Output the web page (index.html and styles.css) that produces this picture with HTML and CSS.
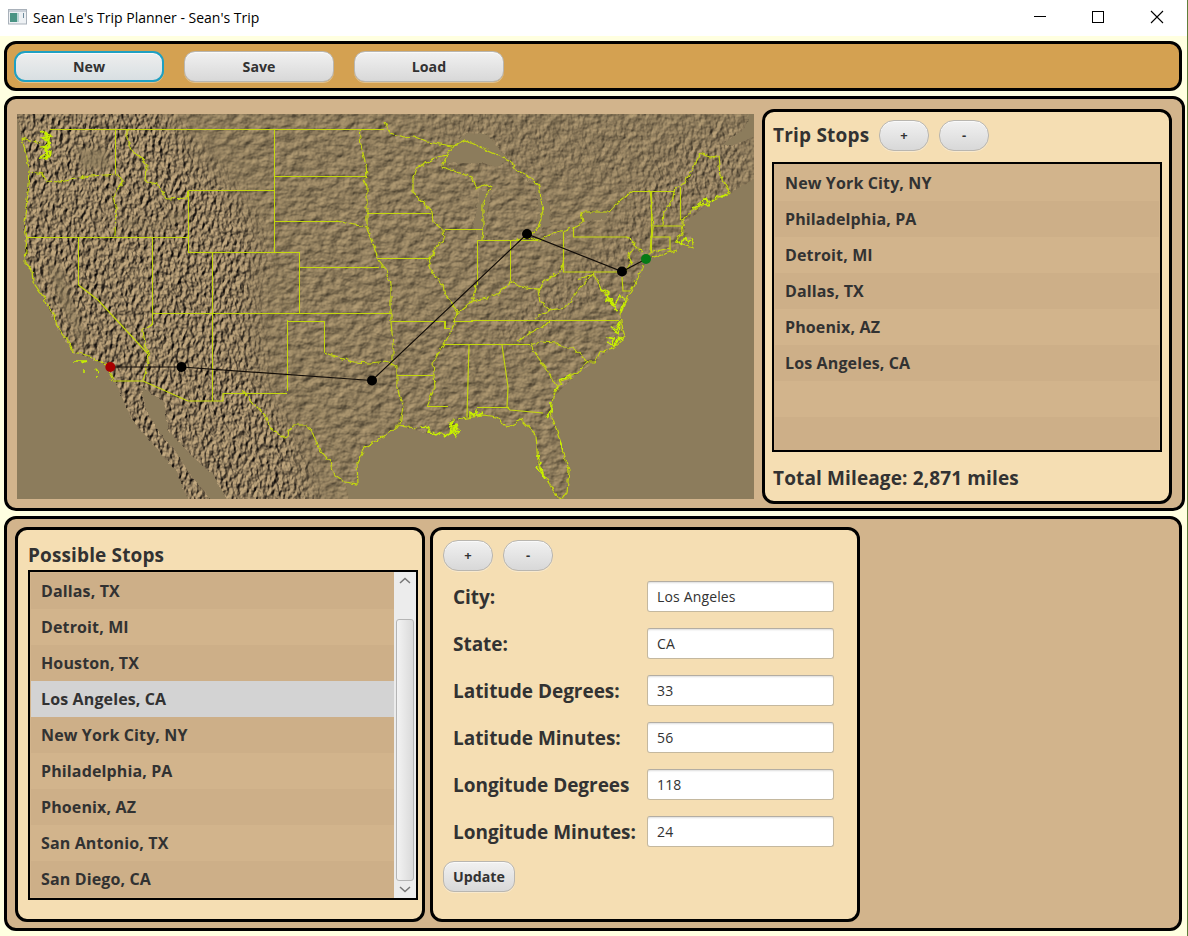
FILE: index.html
```
<!DOCTYPE html>
<html lang="en">
<head>
<meta charset="utf-8">
<title>Sean Le's Trip Planner - Sean's Trip</title>
<link rel="stylesheet" href="styles.css">
</head>
<body>
<div class="window">
  <header class="titlebar">
    <svg class="app-icon" width="19" height="16" viewBox="0 0 19 16"><rect x=".5" y=".5" width="18" height="14.500" fill="#eef1f4" stroke="#a9b1ba"/><rect x="1" y="1" width="17" height="2" fill="#c9d0d8"/><rect x="2" y="4" width="7" height="9" fill="#4a9484"/><rect x="9" y="4" width="2" height="9" fill="#b9d5d4"/><rect x="15" y="4" width="1" height="5" fill="#6f8c9c"/></svg>
    <span class="title">Sean Le's Trip Planner - Sean's Trip</span>
    <svg class="controls" width="130" height="14" viewBox="0 0 130 14" fill="none" stroke="#000" shape-rendering="crispEdges"><path d="M0 6.500H12M58.500 1.500h11v11h-11z"/><path d="M117 1l12 12M129 1l-12 12" shape-rendering="auto" stroke-width="1.100"/></svg>
  </header>
  <main class="workspace">
    <nav class="panel toolbar">
      <button class="btn wide focused">New</button>
      <button class="btn wide">Save</button>
      <button class="btn wide">Load</button>
    </nav>
    <section class="panel trip">
      <svg class="map" width="737" height="385" viewBox="17 114 737 385">
        <defs>
          <filter id="rough" x="0" y="0" width="1" height="1" color-interpolation-filters="sRGB">
            <feTurbulence type="fractalNoise" baseFrequency=".26 .15" numOctaves="4" seed="7"/>
            <feColorMatrix values="0 0 0 0 0 0 0 0 0 0 0 0 0 0 0 1 0 0 0 0"/>
            <feDiffuseLighting surfaceScale="3.300" diffuseConstant="1.280" lighting-color="#a08c68"><feDistantLight azimuth="220" elevation="48"/></feDiffuseLighting>
            <feComponentTransfer><feFuncR type="linear" slope=".92" intercept=".04"/><feFuncG type="linear" slope=".92" intercept=".03"/><feFuncB type="linear" slope=".92" intercept=".03"/></feComponentTransfer>
          </filter>
          <filter id="gentle" x="0" y="0" width="1" height="1" color-interpolation-filters="sRGB">
            <feTurbulence type="fractalNoise" baseFrequency=".09 .13" numOctaves="6" seed="19"/>
            <feColorMatrix values="0 0 0 0 0 0 0 0 0 0 0 0 0 0 0 1 0 0 0 0"/>
            <feDiffuseLighting surfaceScale="1.700" diffuseConstant="1.260" lighting-color="#978462"><feDistantLight azimuth="225" elevation="48"/></feDiffuseLighting>
          </filter>
          <filter id="soft" x="-.2" y="-.2" width="1.400" height="1.400"><feGaussianBlur stdDeviation="14"/></filter>
          <filter id="basin" x="-.3" y="-.3" width="1.600" height="1.600"><feGaussianBlur stdDeviation="3"/></filter>
          <filter id="jag" x="-.05" y="-.05" width="1.100" height="1.100"><feTurbulence type="fractalNoise" baseFrequency=".25" numOctaves="2" seed="3"/><feDisplacementMap in="SourceGraphic" scale="4" xChannelSelector="R" yChannelSelector="G"/></filter>
          <filter id="wiggle" filterUnits="userSpaceOnUse" x="10" y="105" width="750" height="400" color-interpolation-filters="sRGB"><feTurbulence type="fractalNoise" baseFrequency=".18" numOctaves="2" seed="3"/><feDisplacementMap in="SourceGraphic" scale="5" xChannelSelector="R" yChannelSelector="G"/></filter>
          <mask id="ranges"><g fill="#fff" filter="url(#soft)">
            <path d="M0 94H160L195 150 232 190 262 235 255 320 265 390 300 440 320 520H120L90 380 0 280z"/>
            <path d="M470 350L530 305 600 250 640 190 690 140 750 120V180L650 235 600 290 520 345z" fill-opacity=".5"/>
            <path d="M390 104H754V200L600 190 450 150z" fill-opacity=".3"/></g></mask>
        </defs>
        <rect x="17" y="114" width="737" height="385" filter="url(#gentle)"/>
        <g mask="url(#ranges)"><rect x="17" y="114" width="737" height="385" filter="url(#rough)"/></g>
        <g fill="#8c7b5c" filter="url(#basin)" opacity=".65"><path d="M48 262L62 270 78 318 90 344 80 340 58 300z"/><path d="M78 147l30 2 5 20-32 1z"/><path d="M122 219l35 6 32-18 3 8-35 14-33-3z"/></g>
        <g class="water" filter="url(#jag)">
          <path d="M10 105L17 118 23 138 30 170 24 225 27 262 43 295 57 327 73 352 107 365 116 383 132 420 152 443 176 470 191 505H10z"/>
          <path d="M140 385L164 402 169 431 194 458 213 474 230 505H215L192 478 176 452 157 430 146 410z"/>
          <path d="M350 505L346 482 358 484 357 463 365 448 398 426 437 435 458 430 457 420 483 415 497 417 507 427 522 420 536 435 538 463 557 499 567 493 569 470 551 413 553 397 578 373 595 362 625 337 620 315 643 265 652 258 677 250 692 240 682 225 710 202 730 193 760 175V505z"/>
          <path d="M441 163L453 146 466 133 487 134 507 158 498 168 483 163z"/><path d="M480 190l12 0-7 30 1 18-6 7-6-20z"/><path d="M516 172l11 6 11 8 12 22 1 18-14 2 2-16-4-26-16-12z"/>
          <path d="M530 240l20-3 25-12-7 11-20 7zM582 212l26 0-3 8-21 1z"/><path d="M750 110l10 0v25l-28 10-10 0 24-18z"/>
        </g>
        <g class="borders">
          <path shape-rendering="crispEdges" d="M50 129.500H384M115.500 129V174M27 237.500H188.500M188.500 191V252.500H299.500V314M188.500 190.500H274.500M274.500 129V252.500M274.500 176.500H367M274.500 221.500H338M78.500 237V285M152.500 237V325M212.500 252.500V401M152 313.500H392M287.500 320V391M287 321.500H324.500V352M299 267.500H379M367 213.500H431M377 258.500H428M445 229.500H483M477 240.500H538M477.500 240V285M510.500 240V281M391 321.500H445V328.500H450M453 321.500H472V320.500H619M443 344.500H530M397 375.500H433M427 406.500H448M477 407.500H509"/>
          <path d="M563.500 232V272H623M573.500 228V237H627M651.500 191V252M653 226H682M650 237H670V252M680.500 187V220M632 191.500H675M469 345L467 417M502 345L508 387 507 407 510 410 543 413M78.500 285L98 300 149 355M143 381L188 401H223V393.500H287M113 381H143M622 277L623 291H630"/>
          <g filter="url(#wiggle)">
            <path d="M22 138L26 155 30 170 29 185 24 222 27 238 25 262 32 270 33 282 42 295 47 304 55 317 57 327 68 340 73 352 87 355 97 361 107 365 113 381M22 138L40 143M30 172L43 174 46 181 60 182 90 176 118 174 122 183 113 197 116 205 115 237M127 129V138L132 152 139 156 147 165 146 181 157 184 167 199 187 198 188 191M152 325L143 330 145 343 149 355 147 367 143 381"/>
            <path d="M243 391L252 402 265 415 270 428 279 434 285 438 293 425 307 425 313 433 318 447 330 462 335 475 345 482 358 484 357 463 365 448 383 437 398 426 417 428M324 352L337 357 353 362 370 363 387 361 397 367V388L403 407 400 425"/>
            <path d="M359 129L361 145 366 165 367 177 363 181 367 185V227M337 221L350 224 367 227 370 237 376 252 378 260 387 272 386 277 391 283V321L393 345V362"/>
            <path d="M385 123L390 133 403 137 413 136 427 142 453 146 465 140 510 161 517 170 527 176 539 185 543 212 538 228 527 238M453 146L447 155 437 157 417 168 413 180 413 193 423 202 432 212 433 222 443 230 444 240 435 247 433 255 428 260 432 272 443 285 445 295 452 303 457 313 452 330 443 345 433 363 435 387 427 406M447 155L442 167 457 172 472 177 477 188 487 184 493 187 487 193 483 205V230L482 240"/>
            <path d="M477 285L472 301 487 298 500 293 510 282 527 288 538 290 543 282 560 272 563 258M472 301L460 311 457 315M510 241L527 238 540 240 553 233 573 228 583 222 581 212 609 212 618 202 632 191M538 290L540 302 550 310 565 308 577 292 593 273 577 280M593 273L600 287 612 302M550 310L535 318M627 237L632 242 642 252M635 248L628 255 632 263 623 275M675 187L672 202 664 212 663 225M650 191L653 215 650 252"/>
            <path d="M675 187L685 183 692 168 700 154 710 157 718 156 720 175 730 193 710 202 692 210 682 222 683 232 675 242 693 247 692 237M677 250L652 258M648 253L670 248M643 265L638 278 630 292 625 304 620 315 621 322 625 337 613 348 600 352 595 362 587 362 578 373 560 383 553 397 551 413 560 440 569 470 567 493 562 499 557 497 547 480 538 463 536 435 522 420 507 427 497 417 483 415 457 420M530 346L547 370 557 387M530 345L540 342 557 343 562 347 573 347 587 362M550 321L543 327 530 333 517 342"/>
          </g>
          <g class="dense" filter="url(#wiggle)"><path d="M40 133l6-2 4 5-8 2 7 3 1 6-7 1 8 4-1 5-9 2 5-7 4-17M45 131l3 8-2 12 2 8M46 132l3 27M47 133v25M73 361h14l-5 2M84 370v2M95 369l3 4M97 376v2"/><path d="M420 427l10 1-2 4 8 3 5-3 4 5 7-5 4 5 3-6-6-2 4-4-8 2 2-6 4-1M452 420l-2 14 8-10-4 12M470 417v-4l3 3 3-5v5l7-3M600 287l8 6-2 8 6-3 2 8 7-10 4 4-4 12M608 300l10 12M606 294l8 12M610 326l6 4 4-8-1 12-7-4M607 337l7 2-1 6-7-2 9 2 4-8 4 3M560 381l12-7M553 393l5-6M692 208l12-5 4 3 9-10 5 2 4-4M698 204l8-6 2 5M676 240l5 5 4-8 3 6 5-4M538 455l3 7-4 5 8 12-4-11M551 402v10l-5 6M560 441l3 10"/></g>
        </g>
        <path d="M110 367H181.500L372 380.500 527 234 622 271.500 646 259" fill="none" stroke="#120d08" stroke-width="1.200"/>
        <g><circle cx="110.300" cy="367" r="5" fill="#a80000"/><circle cx="181.500" cy="367" r="5"/><circle cx="372" cy="380.500" r="5"/><circle cx="527" cy="234" r="5"/><circle cx="622" cy="271.500" r="5"/><circle cx="646" cy="259" r="5" fill="#067a16"/></g>
      </svg>
      <aside class="panel stops">
        <div class="stops-head"><h2>Trip Stops</h2><button class="btn pill">+</button><button class="btn pill">-</button></div>
        <ul class="list">
          <li>New York City, NY</li><li>Philadelphia, PA</li><li>Detroit, MI</li><li>Dallas, TX</li><li>Phoenix, AZ</li><li>Los Angeles, CA</li><li></li><li></li>
        </ul>
        <p class="mileage">Total Mileage: 2,871 miles</p>
      </aside>
    </section>
    <section class="panel lower">
      <div class="panel possible">
        <h2>Possible Stops</h2>
        <div class="scrollbox">
          <ul class="list shifted">
            <li>Dallas, TX</li><li>Detroit, MI</li><li>Houston, TX</li><li class="selected">Los Angeles, CA</li><li>New York City, NY</li><li>Philadelphia, PA</li><li>Phoenix, AZ</li><li>San Antonio, TX</li><li>San Diego, CA</li>
          </ul>
          <div class="scrollbar">
            <svg width="12" height="7" viewBox="0 0 12 7"><path d="M1 6l5-4.500L11 6" fill="none" stroke="#777" stroke-width="1.500"/></svg>
            <div class="thumb"></div>
            <svg width="12" height="7" viewBox="0 0 12 7"><path d="M1 1l5 4.500L11 1" fill="none" stroke="#777" stroke-width="1.500"/></svg>
          </div>
        </div>
      </div>
      <div class="panel editor">
        <div class="editor-head"><button class="btn pill">+</button><button class="btn pill">-</button></div>
        <form class="fields">
          <label>City:</label><input value="Los Angeles">
          <label>State:</label><input value="CA">
          <label>Latitude Degrees:</label><input value="33">
          <label>Latitude Minutes:</label><input value="56">
          <label>Longitude Degrees</label><input value="118">
          <label>Longitude Minutes:</label><input value="24">
        </form>
        <button class="btn update">Update</button>
      </div>
    </section>
  </main>
</div>
</body>
</html>
```
FILE: styles.css
```
* { box-sizing: border-box; }
body { margin: 0; font-family: "Open Sans", "Noto Sans", sans-serif; color: #323232; }
h2, p, ul { margin: 0; padding: 0; list-style: none; }
.window { width: 1188px; height: 936px; display: flex; flex-direction: column; background: #fff; border-right: 1px solid #5e7f3a; overflow: hidden; }
.titlebar { height: 36px; display: flex; align-items: center; padding: 0 23px 2px 8px; }
.app-icon { margin-bottom: 1px; }
.title { margin-left: 6px; font-size: 14px; color: #000; }
.controls { margin-left: auto; }
.workspace { flex: 1; display: flex; flex-direction: column; gap: 5px; padding: 5px 2px 5px 4px; background: #ffffe0; }
.panel { border: 3px solid #000; border-radius: 12px; background: #d2b48c; }
.toolbar { width: 1178px; height: 50px; display: flex; gap: 20px; padding: 7px; background: #d4a151; }
.trip { height: 415px; display: flex; justify-content: space-between; padding: 10px; }
.map { margin: 5px 0 0; display: block; }
.water { fill: #8c7b5c; }
.borders { fill: none; stroke: #c4d80c; stroke-width: 1.15; }
.dense { stroke: #c8f000; stroke-width: 1.5; }
.btn { height: 31px; border: 1px solid #b9b6b0; border-radius: 11px; background: linear-gradient(#f1f1f1, #d8d8d8); box-shadow: inset 0 1px #fafafa, 0 1px rgba(255,255,255,.35); color: #323232; font: 700 14.200px/29px "Open Sans", sans-serif; padding: 0; }
.wide { width: 150px; }
.focused { border: 2px solid #1fa0c2; line-height: 27px; background: linear-gradient(#eee, #d8dfe2); }
.pill { width: 50px; border-radius: 15px; font-size: 13px; }
.stops { width: 410px; height: 395px; padding: 8px 7px; background: #f5deb3; }
.stops-head { display: flex; gap: 10px; }
h2, .mileage, label { font-size: 19px; font-weight: 700; line-height: 30px; letter-spacing: .13px; white-space: nowrap; }
label { line-height: 32px; height: 31px; letter-spacing: -.03px; }
.stops-head h2 { width: 97px; padding-left: 1px; letter-spacing: .2px; }
.list { flex: 1; padding: 1px; font-size: 16px; font-weight: 700; letter-spacing: .13px; line-height: 36px; background: #d2b48c; }
.list li { height: 36px; padding-left: 10px; background: #d2b48c; }
.list li:nth-child(even) { background: #cdaf88; }
.stops .list { height: 290px; margin-top: 11px; border: 2px solid #000; overflow: hidden; }
.shifted li:nth-child(odd) { background: #cdaf88; }
.shifted li:nth-child(even) { background: #d2b48c; }
.list li.selected { background: #d3d3d3; }
.shifted { padding-right: 0; }
.mileage { margin: 11px 0 0 1px; }
.lower { width: 1178px; height: 415px; display: flex; gap: 5px; padding: 8px; }
.possible { width: 410px; height: 395px; padding: 10px 4px 0 10px; background: #f5deb3; }
.scrollbox { height: 330px; display: flex; border: 2px solid #000; overflow: hidden; }
.scrollbar { width: 22px; display: flex; flex-direction: column; align-items: center; padding: 5px 1px; background: #ececec; }
.thumb { width: 18px; height: 262px; margin: auto 0 5px; border: 1px solid #b5b5b5; border-radius: 3px; background: linear-gradient(90deg, #f3f3f3, #dadada); }
.editor { width: 430px; height: 395px; padding: 10px; background: #f5deb3; }
.editor-head { display: flex; gap: 10px; }
.fields { display: grid; grid-template-columns: 194px 187px; gap: 16px 0; padding: 10px 0 14px 10px; }
input { height: 31px; border: 1px solid #c4b89f; border-top-color: #b3ada3; border-radius: 3px; background: #fff; padding: 0 9px; font: 14px "Open Sans", sans-serif; letter-spacing: .15px; color: #323232; box-shadow: inset 0 2px 2px -1px #ddd; }
.update { width: 72px; display: block; }
```
